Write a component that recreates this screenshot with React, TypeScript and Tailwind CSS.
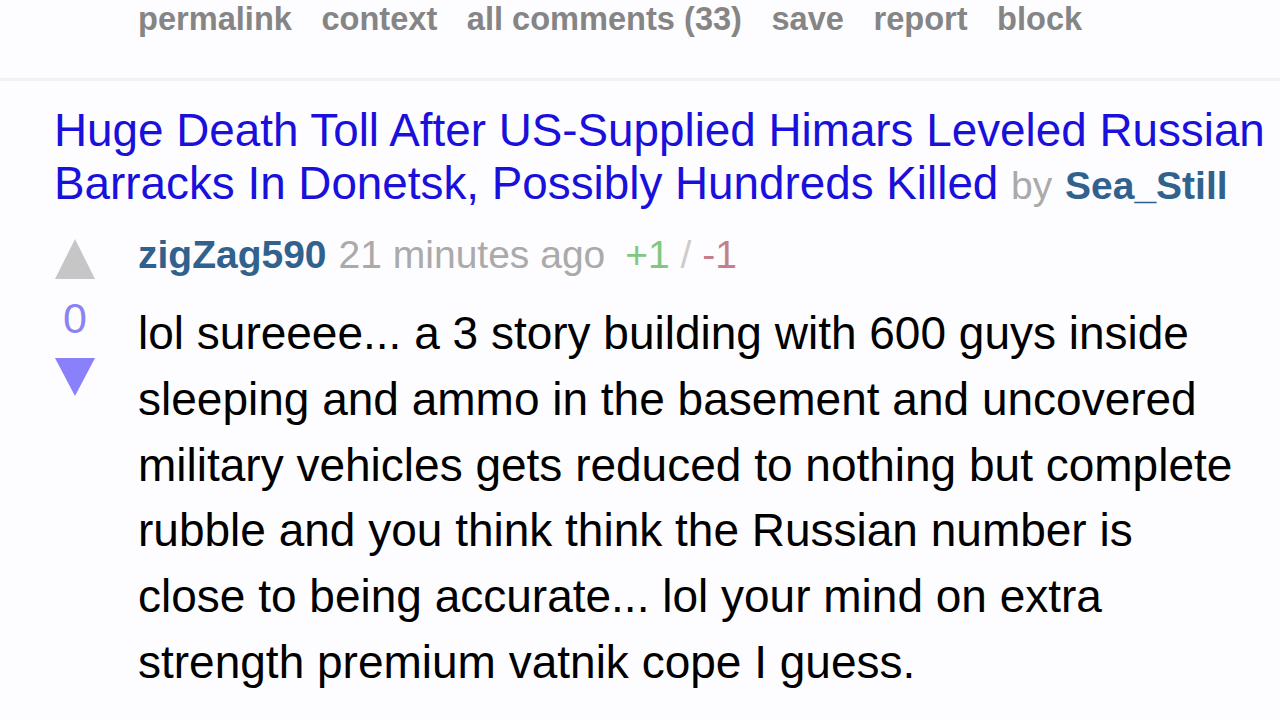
import React from "react";

export default function App() {
  const links = ["permalink", "context", "all comments (33)", "save", "report", "block"];
  const body = [
    "lol sureeee... a 3 story building with 600 guys inside",
    "sleeping and ammo in the basement and uncovered",
    "military vehicles gets reduced to nothing but complete",
    "rubble and you think think the Russian number is",
    "close to being accurate... lol your mind on extra",
    "strength premium vatnik cope I guess.",
  ];
  return (
    <div className="w-[1280px] h-[720px] overflow-hidden bg-[#fdfcfe] font-['Liberation_Sans',Arial,sans-serif]">
      <div className="h-[78px] pl-[138px] pt-[1px]">
        <div className="flex gap-[29.5px] font-bold text-[#858585] text-[32.6px] leading-[36px]">
          {links.map((l) => (
            <span key={l}>{l}</span>
          ))}
        </div>
      </div>
      <div className="h-[3px] bg-[#f3f1f6]" />
      <div className="pl-[54px] pt-[23px]">
        <div className="text-[45.8px] leading-[53px] text-[#1a10dc]">
          <div className="whitespace-nowrap">Huge Death Toll After US-Supplied Himars Leveled Russian</div>
          <div className="whitespace-nowrap">
            Barracks In Donetsk, Possibly Hundreds Killed{" "}
            <span className="text-[39px] text-[#aaaaaa]">by</span>{" "}
            <span className="text-[39px] font-bold text-[#30628d]">Sea_Still</span>
          </div>
        </div>
      </div>
      <div className="flex mt-[18px]">
        <div className="w-[138px] shrink-0 pl-[55px]">
          <div className="w-[40px] flex flex-col items-center">
            <div className="w-0 h-0 border-l-[20px] border-r-[20px] border-b-[40px] border-l-transparent border-r-transparent border-b-[#c6c6c6] mt-[9px]" />
            <div className="text-[43px] leading-[43px] text-[#8a84f2] mt-[18px]">0</div>
            <div className="w-0 h-0 border-l-[20px] border-r-[20px] border-t-[38px] border-l-transparent border-r-transparent border-t-[#8a80fa] mt-[18px]" />
          </div>
        </div>
        <div className="flex-1">
          <div className="flex items-baseline text-[39px] leading-[50px] whitespace-nowrap">
            <span className="font-bold text-[#30628d]">zigZag590</span>
            <span className="ml-[12px] text-[#aaaaaa]">21 minutes ago</span>
            <span className="ml-[20px] whitespace-pre">
              <span className="text-[#80c880]">+1</span>
              <span className="text-[#cccccc]"> / </span>
              <span className="text-[#c4808a]">-1</span>
            </span>
          </div>
          <div className="mt-[21px] text-[46px] leading-[65.8px] text-black">
            {body.map((b) => (
              <div key={b} className="whitespace-nowrap">{b}</div>
            ))}
          </div>
        </div>
      </div>
    </div>
  );
}
